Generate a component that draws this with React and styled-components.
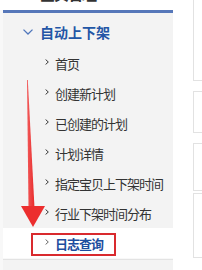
import styled, { createGlobalStyle } from "styled-components"

const Global = createGlobalStyle`
    html, body {
        margin: 0;
        padding: 0;
        background: #fff;
    }
    body {
        font-family: "Noto Sans CJK SC", "Noto Sans", sans-serif;
    }
`

const items = ["首页", "创建新计划", "已创建的计划", "计划详情", "指定宝贝上下架时间", "行业下架时间分布"]

const ChevronRight = ({ color = "#333" }) => (
    <svg width="4" height="6" viewBox="0 0 4 6">
        <polyline points="0.6,0.5 3.3,3 0.6,5.5" fill="none" stroke={color} strokeWidth="1" />
    </svg>
)

const ChevronDown = () => (
    <svg width="10" height="6" viewBox="0 0 10 6">
        <polyline points="0.5,0.6 5,5 9.5,0.6" fill="none" stroke="#4f76bb" strokeWidth="1.3" />
    </svg>
)

const App = () => {
    return (
        <Page>
            <Global />
            <Side>
                <TopTab>
                    <TopText>宝贝管理</TopText>
                </TopTab>
                <Body>
                    <Menu>
                        <GroupHead>
                            <ChevronDown />
                            <span>自动上下架</span>
                        </GroupHead>
                        {items.map(t => (
                            <Item key={t}>
                                <ChevronRight />
                                <span>{t}</span>
                            </Item>
                        ))}
                        <Item $active>
                            <ChevronRight color="#666" />
                            <span>日志查询</span>
                        </Item>
                    </Menu>
                    <NextGroup />
                </Body>
            </Side>
            <Main>
                <Card $top={-1} $h={82} />
                <Card $top={10} $h={42} />
                <Card $top={10} $h={48} />
                <Card $top={2} $h={65} />
            </Main>
            <Highlight />
            <Arrow viewBox="0 0 202 270" width="202" height="270">
                <defs>
                    <linearGradient id="shaft" x1="0" y1="0" x2="1" y2="0">
                        <stop offset="0" stopColor="#f25a5a" />
                        <stop offset="1" stopColor="#e82a2a" />
                    </linearGradient>
                </defs>
                <polygon points="27,80 27.8,80 34.5,208 28.5,208" fill="url(#shaft)" />
                <polygon points="21,206 45,206 33,227" fill="#ec2e2e" />
            </Arrow>
        </Page>
    )
}

export default App

const Page = styled.div`
    position: relative;
    display: flex;
    width: 202px;
    height: 270px;
    overflow: hidden;
    background: #fff;
`

const Side = styled.div`
    width: 173px;
    display: flex;
    flex-direction: column;
`

const TopTab = styled.div`
    height: 10px;
    overflow: hidden;
    padding-left: 40px;
`

const TopText = styled.div`
    font-size: 15px;
    font-weight: bold;
    line-height: 15px;
    color: #333;
    margin-top: -14px;
    letter-spacing: -1px;
`

const Body = styled.div`
    flex: 1;
    display: flex;
    flex-direction: column;
    background: #f8f8f8;
    padding-left: 3px;
`

const Menu = styled.div`
    border-top: 3px solid #5677b9;
    background: #f3f3f3;
`

const GroupHead = styled.div`
    height: 35px;
    display: flex;
    align-items: center;
    gap: 7px;
    padding: 3px 0 0 20px;
    box-sizing: border-box;
    font-size: 14px;
    font-weight: bold;
    color: #2356a6;
`

const Item = styled.div`
    height: 30px;
    display: flex;
    align-items: center;
    gap: 6px;
    padding-left: 42px;
    font-size: 13px;
    letter-spacing: -1px;
    color: ${p => (p.$active ? "#1d4d9e" : "#333")};
    font-weight: ${p => (p.$active ? "bold" : "normal")};
    background: ${p => (p.$active ? "#fff" : "transparent")};

    & > svg {
        margin-top: -2px;
    }
`

const NextGroup = styled.div`
    flex: 1;
    border-top: 1px solid #e3e3e3;
    margin-top: 1px;
    background: #f3f3f3;
`

const Main = styled.div`
    flex: 1;
    display: flex;
    flex-direction: column;
    padding-left: 20px;
`

const Card = styled.div`
    margin-top: ${p => p.$top}px;
    height: ${p => p.$h}px;
    border: 1px solid #e2e2e2;
    border-right: none;
    box-sizing: border-box;
`

const Highlight = styled.div`
    position: absolute;
    left: 31px;
    top: 233px;
    width: 85px;
    height: 23px;
    border: 2px solid #d92a2e;
    box-sizing: border-box;
`

const Arrow = styled.svg`
    position: absolute;
    left: 0;
    top: 0;
    pointer-events: none;
`
